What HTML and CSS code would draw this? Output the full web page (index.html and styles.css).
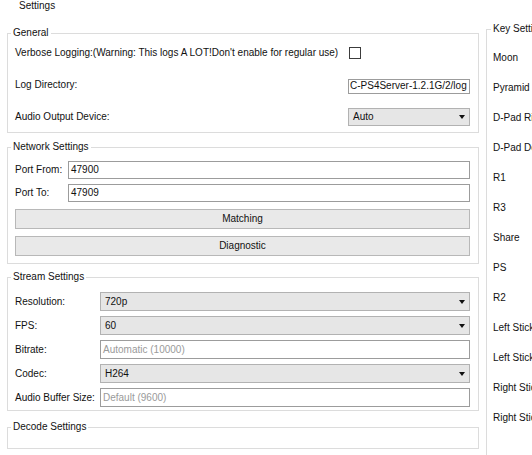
FILE: index.html
```html
<!DOCTYPE html>
<html>
<head>
<meta charset="utf-8">
<title>Settings</title>
<link rel="stylesheet" href="styles.css">
</head>
<body>
<div class="title">Settings</div>
<div class="main">
  <div class="left">
    <fieldset class="group general">
      <legend>General</legend>
      <div class="body">
        <div class="grow">
          <span class="lbl">Verbose Logging:(Warning: This logs A LOT!Don't enable for regular use)</span>
          <span class="check"></span>
        </div>
        <div class="grow">
          <span class="lbl">Log Directory:</span>
          <span class="edit path">C-PS4Server-1.2.1G/2/log</span>
        </div>
        <div class="grow">
          <span class="lbl">Audio Output Device:</span>
          <span class="combo">Auto<i class="arrow"></i></span>
        </div>
      </div>
    </fieldset>

    <fieldset class="group network">
      <legend>Network Settings</legend>
      <div class="body">
        <div class="prow">
          <span class="lbl">Port From:</span>
          <span class="edit">47900</span>
        </div>
        <div class="prow second">
          <span class="lbl">Port To:</span>
          <span class="edit">47909</span>
        </div>
        <div class="button first">Matching</div>
        <div class="button">Diagnostic</div>
      </div>
    </fieldset>

    <fieldset class="group stream">
      <legend>Stream Settings</legend>
      <div class="body">
        <div class="srow">
          <span class="lbl">Resolution:</span>
          <span class="combo">720p<i class="arrow"></i></span>
        </div>
        <div class="srow">
          <span class="lbl">FPS:</span>
          <span class="combo">60<i class="arrow"></i></span>
        </div>
        <div class="srow">
          <span class="lbl">Bitrate:</span>
          <span class="edit placeholder">Automatic (10000)</span>
        </div>
        <div class="srow">
          <span class="lbl">Codec:</span>
          <span class="combo">H264<i class="arrow"></i></span>
        </div>
        <div class="srow">
          <span class="lbl">Audio Buffer Size:</span>
          <span class="edit placeholder">Default (9600)</span>
        </div>
      </div>
    </fieldset>

    <fieldset class="group decode">
      <legend>Decode Settings</legend>
      <div class="body"></div>
    </fieldset>
  </div>

  <fieldset class="group keys">
    <legend>Key Settings</legend>
    <div class="body">
      <div class="krow">Moon</div>
      <div class="krow">Pyramid</div>
      <div class="krow">D-Pad Right</div>
      <div class="krow">D-Pad Down</div>
      <div class="krow">R1</div>
      <div class="krow">R3</div>
      <div class="krow">Share</div>
      <div class="krow">PS</div>
      <div class="krow">R2</div>
      <div class="krow">Left Stick X</div>
      <div class="krow">Left Stick Y</div>
      <div class="krow">Right Stick X</div>
      <div class="krow">Right Stick Y</div>
    </div>
  </fieldset>
</div>
</body>
</html>
```

FILE: styles.css
```css
html, body {
  margin: 0;
  padding: 0;
}

body {
  width: 532px;
  height: 455px;
  overflow: hidden;
  background: #ffffff;
  font-family: "Liberation Sans", Arial, sans-serif;
  font-size: 10px;
  line-height: 12px;
  color: #111111;
}

.title {
  height: 11px;
  line-height: 11px;
  padding-left: 19px;
}

.main {
  display: flex;
  align-items: flex-start;
  padding-left: 7px;
  margin-top: 12px;
}

.left {
  width: 472px;
  flex: none;
  display: flex;
  flex-direction: column;
  margin-top: 4px;
}

fieldset.group {
  margin: 0;
  min-width: 0;
  border: 1px solid #dcdcdc;
  padding: 0 8px 0 7px;
}

fieldset.group legend {
  padding: 0 2px;
  margin-left: -4px;
  font-size: 10px;
  line-height: 12px;
}

.body {
  display: flex;
  flex-direction: column;
}

/* General */
.general .body {
  padding: 4px 0 5px;
  gap: 12px;
}

.grow {
  height: 20px;
  display: grid;
  grid-template-columns: 333px 122px;
  align-items: center;
}

.check {
  width: 12px;
  height: 12px;
  box-sizing: border-box;
  border: 1px solid #3c3c3c;
  background: #fff;
  margin-left: 1px;
}

.edit {
  display: flex;
  align-items: center;
  box-sizing: border-box;
  height: 18px;
  background: #fff;
  border: 1px solid #9c9c9c;
  padding-left: 2px;
  white-space: nowrap;
  overflow: hidden;
}

.edit.path {
  height: 15px;
  padding-left: 1px;
  margin-top: 2px;
}

.edit.placeholder {
  color: #9a9a9a;
}

.combo {
  display: flex;
  align-items: center;
  box-sizing: border-box;
  height: 18px;
  background: #e6e6e6;
  border: 1px solid #b2b2b2;
  padding-left: 4px;
}

.arrow {
  margin-left: auto;
  margin-right: 4px;
  width: 0;
  height: 0;
  border-left: 3.5px solid transparent;
  border-right: 3.5px solid transparent;
  border-top: 4px solid #111;
}

/* Network */
.network {
  margin-top: 8px !important;
}

.network .body {
  padding: 8px 0 7px;
}

.prow {
  height: 18px;
  display: grid;
  grid-template-columns: 53px 1fr;
  align-items: center;
}

.prow .edit {
  height: 18px;
}

.prow.second {
  margin-top: 5px;
}

.button {
  height: 20px;
  box-sizing: border-box;
  background: #e9e9e9;
  border: 1px solid #b8b8b8;
  display: flex;
  align-items: center;
  justify-content: center;
  margin-top: 7px;
}

/* Stream */
.stream {
  margin-top: 7px !important;
}

.stream .body {
  padding: 9px 0 3px;
  gap: 5px;
}

.srow {
  height: 19px;
  display: grid;
  grid-template-columns: 85px 1fr;
  align-items: center;
}

.srow .combo,
.srow .edit {
  height: 19px;
}

/* Decode */
.decode {
  margin-top: 10px !important;
}

.decode .body {
  height: 15px;
}

/* Keys */
fieldset.keys {
  flex: none;
  width: 200px;
  margin-left: 7px;
  padding: 0 6px 40px 6px;
}

fieldset.keys legend {
  margin-left: -2px;
}

.keys .body {
  padding-top: 8px;
}

.krow {
  height: 30px;
  line-height: 30px;
  white-space: nowrap;
}
```
